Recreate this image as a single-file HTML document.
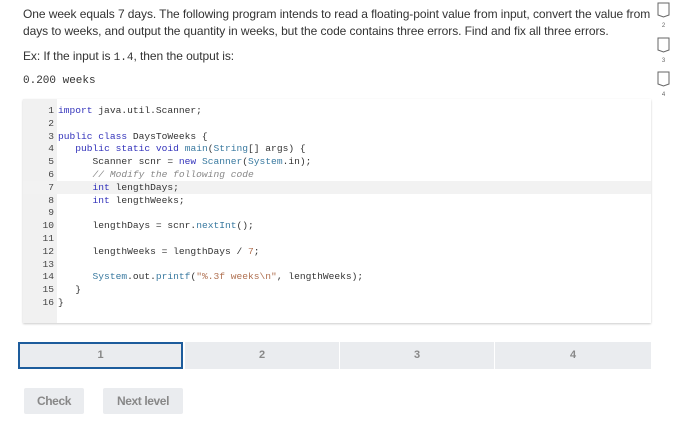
<!DOCTYPE html>
<html><head><style>
body{margin:0;width:679px;height:438px;background:#fff;position:relative;overflow:hidden;font-family:"Liberation Sans",sans-serif;color:#333}
.p{position:absolute;left:23px;font-size:12px;letter-spacing:-0.07px;white-space:nowrap}
.mono{font-family:"Liberation Mono",monospace;letter-spacing:0}
.code{position:absolute;left:23px;top:99px;width:628px;height:224px;background:#fff;box-shadow:0 1px 2px #ccc}
.gut{position:absolute;left:0;top:0;width:34px;height:224px;background:#f1f1f1}
.ln{position:absolute;font-family:"Liberation Mono",monospace;font-size:9.6px;height:12.8px;line-height:12.8px;white-space:pre}
.num{left:0;width:31px;text-align:right;color:#444}
.txt{left:35px;color:#333}
.k{color:#3333bb}.s{color:#b07050}.c{color:#888;font-style:italic}.t{color:#3a7aa0}
.tab{position:absolute;top:342px;height:27px;background:#eaecef;color:#888;font-size:11px;font-weight:bold;text-align:center;line-height:27px}
.btn{position:absolute;top:388px;height:26px;background:#eaecef;color:#888;font-size:12px;font-weight:bold;text-align:center;line-height:26px;letter-spacing:-0.4px;border-radius:2px}
.ic{position:absolute;left:657px;width:13px}
.ic span{display:block;text-align:center;font-size:6px;color:#666}
</style></head><body>
<div class="p" style="top:7px">One week equals 7 days. The following program intends to read a floating-point value from input, convert the value from</div>
<div class="p" style="top:24px">days to weeks, and output the quantity in weeks, but the code contains three errors. Find and fix all three errors.</div>
<div class="p" style="top:49px">Ex: If the input is <span class="mono" style="font-size:11px">1.4</span>, then the output is:</div>
<div class="p mono" style="top:75px;font-size:11px">0.200 weeks</div>

<div class="ic" style="top:2px"><svg width="13" height="16"><path d="M1 1H12V13L6.5 15L1 13Z" fill="none" stroke="#666" stroke-width="1"/></svg><span>2</span></div>
<div class="ic" style="top:37px"><svg width="13" height="16"><path d="M1 1H12V13L6.5 15L1 13Z" fill="none" stroke="#666" stroke-width="1"/></svg><span>3</span></div>
<div class="ic" style="top:71px"><svg width="13" height="16"><path d="M1 1H12V13L6.5 15L1 13Z" fill="none" stroke="#666" stroke-width="1"/></svg><span>4</span></div>

<div class="code">
<div class="gut"></div>
<div style="position:absolute;left:0;top:82px;width:628px;height:12.8px;background:#f2f2f2"></div>
<div class="ln num" style="top:6px">1</div><div class="ln txt" style="top:6px"><span class="k">import</span> java.util.Scanner;</div>
<div class="ln num" style="top:18.8px">2</div>
<div class="ln num" style="top:31.6px">3</div><div class="ln txt" style="top:31.6px"><span class="k">public class</span> DaysToWeeks {</div>
<div class="ln num" style="top:44.4px">4</div><div class="ln txt" style="top:44.4px">   <span class="k">public static void</span> <span class="t">main</span>(<span class="t">String</span>[] args) {</div>
<div class="ln num" style="top:57.2px">5</div><div class="ln txt" style="top:57.2px">      Scanner scnr = <span class="k">new</span> <span class="t">Scanner</span>(<span class="t">System</span>.in);</div>
<div class="ln num" style="top:70px">6</div><div class="ln txt c" style="top:70px">      // Modify the following code</div>
<div class="ln num" style="top:82.8px">7</div><div class="ln txt" style="top:82.8px">      <span class="k">int</span> lengthDays;</div>
<div class="ln num" style="top:95.6px">8</div><div class="ln txt" style="top:95.6px">      <span class="k">int</span> lengthWeeks;</div>
<div class="ln num" style="top:108.4px">9</div>
<div class="ln num" style="top:121.2px">10</div><div class="ln txt" style="top:121.2px">      lengthDays = scnr.<span class="t">nextInt</span>();</div>
<div class="ln num" style="top:134px">11</div>
<div class="ln num" style="top:146.8px">12</div><div class="ln txt" style="top:146.8px">      lengthWeeks = lengthDays / <span class="s">7</span>;</div>
<div class="ln num" style="top:159.6px">13</div>
<div class="ln num" style="top:172.4px">14</div><div class="ln txt" style="top:172.4px">      <span class="t">System</span>.out.<span class="t">printf</span>(<span class="s">"%.3f weeks\n"</span>, lengthWeeks);</div>
<div class="ln num" style="top:185.2px">15</div><div class="ln txt" style="top:185.2px">   }</div>
<div class="ln num" style="top:198px">16</div><div class="ln txt" style="top:198px">}</div>
</div>

<div class="tab" style="left:18px;width:161px;border:2px solid #1d5c9c;height:23px;line-height:23px">1</div>
<div class="tab" style="left:185px;width:154px">2</div>
<div class="tab" style="left:340px;width:154px">3</div>
<div class="tab" style="left:495px;width:156px">4</div>

<div class="btn" style="left:24px;width:60px">Check</div>
<div class="btn" style="left:103px;width:80px">Next level</div>
</body></html>
